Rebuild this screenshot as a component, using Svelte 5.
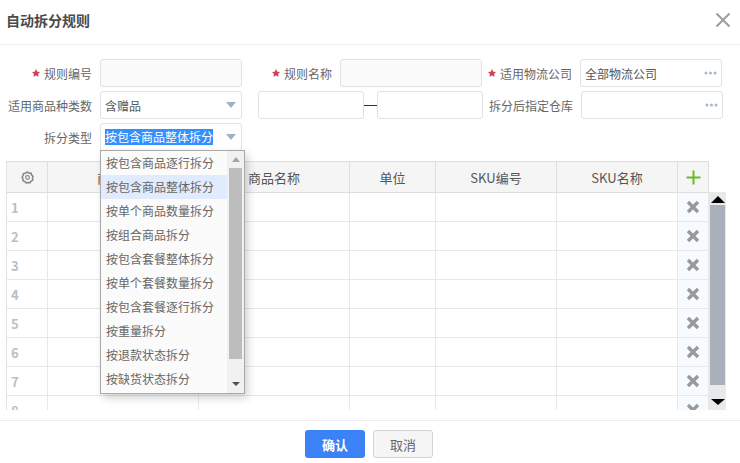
<script>
  const options = ['按包含商品逐行拆分','按包含商品整体拆分','按单个商品数量拆分','按组合商品拆分','按包含套餐整体拆分','按单个套餐数量拆分','按包含套餐逐行拆分','按重量拆分','按退款状态拆分','按缺货状态拆分'];
  const rows = [1,2,3,4,5,6,7,8];
  const cols = ['商品编码','商品名称','单位','SKU编号','SKU名称'];
</script>

<div class="dialog">
  <header class="head">
    <h1>自动拆分规则</h1>
    <svg class="close" width="16" height="16" viewBox="0 0 16 16"><path d="M1.5 1.5 14.5 14.5M14.5 1.5 1.5 14.5" stroke="#9a9ea3" stroke-width="2" fill="none"/></svg>
  </header>

  <section class="form">
    <div class="row">
      <label class="l l1"><svg class="star" viewBox="0 0 10 10"><polygon points="5,0 6.6,3.3 10,3.8 7.6,6.2 8.2,9.6 5,8 1.8,9.6 2.4,6.2 0,3.8 3.4,3.3"/></svg>规则编号</label>
      <div class="box ro"></div>
      <label class="l l2"><svg class="star" viewBox="0 0 10 10"><polygon points="5,0 6.6,3.3 10,3.8 7.6,6.2 8.2,9.6 5,8 1.8,9.6 2.4,6.2 0,3.8 3.4,3.3"/></svg>规则名称</label>
      <div class="box ro"></div>
      <label class="l l2"><svg class="star" viewBox="0 0 10 10"><polygon points="5,0 6.6,3.3 10,3.8 7.6,6.2 8.2,9.6 5,8 1.8,9.6 2.4,6.2 0,3.8 3.4,3.3"/></svg>适用物流公司</label>
      <div class="box"><span>全部物流公司</span><svg class="dots" width="13" height="4" viewBox="0 0 13 4"><circle cx="2" cy="2" r="1.5"/><circle cx="6.5" cy="2" r="1.5"/><circle cx="11" cy="2" r="1.5"/></svg></div>
    </div>
    <div class="row">
      <label class="l l1">适用商品种类数</label>
      <div class="box"><span>含赠品</span><i class="arrow"></i></div>
      <div class="box short first"></div>
      <div class="dash"></div>
      <div class="box short"></div>
      <label class="l l2">拆分后指定仓库</label>
      <div class="box"><svg class="dots" width="13" height="4" viewBox="0 0 13 4"><circle cx="2" cy="2" r="1.5"/><circle cx="6.5" cy="2" r="1.5"/><circle cx="11" cy="2" r="1.5"/></svg></div>
    </div>
    <div class="row">
      <label class="l l1">拆分类型</label>
      <div class="box select">
        <span class="sel">按包含商品整体拆分</span><i class="arrow"></i>
        <div class="menu">
          <ul>
            {#each options as o, i}
              <li class:on={i === 1}>{o}</li>
            {/each}
          </ul>
          <div class="mbar">
            <i class="up"></i>
            <div class="mthumb"></div>
            <i class="down"></i>
          </div>
        </div>
      </div>
    </div>
  </section>

  <section class="grid">
    <table>
      <colgroup>
        <col class="c0"/><col class="c1"/><col class="c2"/><col class="c3"/><col class="c4"/><col class="c5"/><col class="c6"/>
      </colgroup>
      <thead>
        <tr>
          <th><svg width="13" height="13" viewBox="0 0 13 13" fill="none" stroke="#858585"><path stroke-width="1.5" stroke-linejoin="round" d="M6.5 1 8 2.2 10 2.1 10.6 4 12 5.4 11.4 7.3 11.9 9.2 10.1 10.1 9 11.8 7 11.5 5.2 12 3.9 10.5 2 9.9 2 7.9 1 6.3 2.1 4.6 2.3 2.7 4.2 2.3Z"/><circle cx="6.5" cy="6.5" r="1.9" stroke-width="1.1"/></svg></th>
          {#each cols as c}<th>{c}</th>{/each}
          <th><svg width="15" height="15" viewBox="0 0 15 15"><path d="M7.5 0.5v14M0.5 7.5h14" stroke="#6cb82c" stroke-width="2"/></svg></th>
        </tr>
      </thead>
      <tbody>
        {#each rows as r}
          <tr>
            <td class="num">{r}</td>
            {#each cols as c}<td></td>{/each}
            <td class="del"><svg width="14" height="14" viewBox="0 0 14 14"><path d="M2 2 12 12M12 2 2 12" stroke="#999" stroke-width="3.4" fill="none"/></svg></td>
          </tr>
        {/each}
      </tbody>
    </table>
    <div class="vbar">
      <i class="vup"></i>
      <div class="vthumb"></div>
      <i class="vdown"></i>
    </div>
  </section>

  <footer class="foot">
    <button class="ok">确认</button>
    <button class="no">取消</button>
  </footer>
</div>

<style>
  :global(body) { margin: 0; background: #fff; }
  .dialog {
    width: 740px; height: 463px; overflow: hidden; background: #fff;
    font-family: "Noto Sans CJK SC", "Noto Sans", sans-serif; font-size: 12px; color: #555;
    display: flex; flex-direction: column;
  }
  .head {
    height: 40px; border-bottom: 1px solid #ebeef2; flex: none;
    display: flex; align-items: center; justify-content: space-between;
    padding: 0 9px 4px 6px;
  }
  h1 { margin: 0; font-size: 14px; font-weight: 700; color: #4a4a4a; line-height: 20px; }
  .form { padding-top: 14px; flex: none; }
  .row { display: flex; height: 28px; margin-bottom: 4px; }
  .l {
    display: flex; align-items: center; justify-content: flex-end;
    margin-right: 8px; color: #666; white-space: nowrap; flex: none;
  }
  .l1 { width: 92px; }
  .l2 { width: 90px; }
  .star { width: 8px; height: 8px; fill: #d93f58; margin-right: 4px; }
  .box {
    position: relative;
    width: 142px; height: 28px; box-sizing: border-box; flex: none;
    border: 1px solid #dde2e6; border-radius: 3px; background: #fff;
    display: flex; align-items: center; justify-content: space-between;
    padding: 0 4px; color: #555;
  }
  .ro { background: #fafafa; }
  .short { width: 106px; }
  .first { margin-left: 16px; }
  .dash { width: 13px; height: 1px; background: #333; align-self: center; flex: none; }
  .dots { fill: #a5b9c6; margin-left: auto; }
  .arrow {
    width: 0; height: 0; flex: none; margin-left: auto; margin-right: 1px;
    border-left: 5px solid transparent; border-right: 5px solid transparent;
    border-top: 6px solid #9db3bf;
  }
  .sel { background: #3390ff; color: #fff; line-height: 16px; }
  .menu {
    position: absolute; left: -1px; top: 26px; z-index: 5;
    width: 145px; height: 244px; box-sizing: border-box;
    border: 1px solid #a9a9a9; background: #fbfbfb;
    box-shadow: 3px 4px 8px rgba(0,0,0,.18);
    display: flex;
  }
  ul { list-style: none; margin: 0; padding: 0; flex: 1; min-width: 0; }
  li { height: 24px; line-height: 24px; padding-left: 5px; color: #666; white-space: nowrap; }
  li.on { background: #e0ebfd; }
  .mbar { width: 17px; background: #f1f1f1; flex: none; display: flex; flex-direction: column; align-items: center; }
  .mthumb { width: 13px; height: 191px; background: #bdbdbd; margin: 6px 0 0; }
  .up {
    width: 0; height: 0; margin-top: 6px;
    border-left: 4px solid transparent; border-right: 4px solid transparent; border-bottom: 5px solid #a5a5a5;
  }
  .down {
    width: 0; height: 0; margin-top: 23px;
    border-left: 4px solid transparent; border-right: 4px solid transparent; border-top: 4px solid #505050;
  }
  .grid {
    margin: 6px 0 0 6px; height: 249px; overflow: hidden; flex: none;
    display: flex; align-items: flex-start;
  }
  table { border-collapse: separate; border-spacing: 0; table-layout: fixed; width: 703px; flex: none; }
  .c0 { width: 42px; } .c1 { width: 151px; } .c2 { width: 151px; } .c3 { width: 86px; }
  .c4 { width: 121px; } .c5 { width: 121px; } .c6 { width: 31px; }
  th {
    height: 32px; box-sizing: border-box; padding: 0; background: #f5f5f5;
    border: solid #dedede; border-width: 1px 1px 1px 0;
    font-size: 13px; font-weight: 400; color: #555; text-align: center; vertical-align: middle;
  }
  th:first-child, td:first-child { border-left: 1px solid #e2e2e2; }
  th svg { display: block; margin: auto; }
  td {
    height: 29px; box-sizing: border-box; padding: 0;
    border: solid #e8e8e8; border-width: 0 1px 1px 0;
  }
  .num { color: #b7c0c9; font-weight: 700; font-size: 13px; padding-left: 4px; }
  .del { background: #f7fbff; text-align: center; }
  .del svg { display: block; margin: auto; }
  .vbar {
    width: 17px; height: 218px; margin-top: 31px; background: #e9e9e9; flex: none;
    display: flex; flex-direction: column; align-items: center;
  }
  .vthumb { width: 15px; height: 180px; background: #a8b0bc; margin-top: 2px; }
  .vup {
    width: 0; height: 0; margin-top: 4px;
    border-left: 7px solid transparent; border-right: 7px solid transparent; border-bottom: 7px solid #000;
  }
  .vdown {
    width: 0; height: 0; margin-top: 14px;
    border-left: 7px solid transparent; border-right: 7px solid transparent; border-top: 6px solid #000;
  }
  .foot {
    margin-top: 10px; border-top: 1px solid #ebebf0; padding-top: 9px; flex: none;
    display: flex; justify-content: center; gap: 8px; padding-right: 2px;
  }
  button {
    width: 60px; height: 28px; padding: 0; border-radius: 3px; font-family: inherit; font-size: 13px;
  }
  .ok { background: #3b82f6; border: 0; color: #fff; font-weight: 700; }
  .no { background: #f5f5f5; border: 1px solid #d4d4d4; color: #666; }
</style>
